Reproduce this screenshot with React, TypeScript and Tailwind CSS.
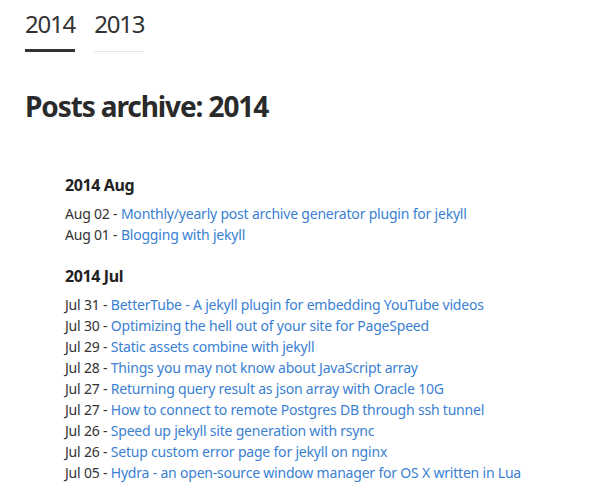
import React from 'react';

interface Post {
  date: string;
  title: string;
}

interface MonthGroup {
  label: string;
  posts: Post[];
}

const groups: MonthGroup[] = [
  {
    label: '2014 Aug',
    posts: [
      { date: 'Aug 02', title: 'Monthly/yearly post archive generator plugin for jekyll' },
      { date: 'Aug 01', title: 'Blogging with jekyll' },
    ],
  },
  {
    label: '2014 Jul',
    posts: [
      { date: 'Jul 31', title: 'BetterTube - A jekyll plugin for embedding YouTube videos' },
      { date: 'Jul 30', title: 'Optimizing the hell out of your site for PageSpeed' },
      { date: 'Jul 29', title: 'Static assets combine with jekyll' },
      { date: 'Jul 28', title: 'Things you may not know about JavaScript array' },
      { date: 'Jul 27', title: 'Returning query result as json array with Oracle 10G' },
      { date: 'Jul 27', title: 'How to connect to remote Postgres DB through ssh tunnel' },
      { date: 'Jul 26', title: 'Speed up jekyll site generation with rsync' },
      { date: 'Jul 26', title: 'Setup custom error page for jekyll on nginx' },
      { date: 'Jul 05', title: 'Hydra - an open-source window manager for OS X written in Lua' },
    ],
  },
];

export default function App() {
  return (
    <div className="min-h-[499px] bg-white px-[25px] text-[#333] [font-family:'Noto_Sans',sans-serif]">
      {/* Year tabs */}
      <div className="flex gap-[19px] pt-[8px]">
        <a className="block border-b-[3px] border-[#333] pb-[9px] text-[24px] leading-[32px] tracking-[-1.2px] text-[#333]">2014</a>
        <a className="block border-b border-[#e5e5e5] pb-[11px] text-[24px] leading-[32px] tracking-[-1.2px] text-[#333]">2013</a>
      </div>

      <h1 className="mt-[36px] text-[28px] font-bold leading-[36px] tracking-[-1.1px] text-[#2a2a2a]">Posts archive: 2014</h1>

      <div className="mt-[50px] pl-[40px]">
        {groups.map((g) => (
          <div key={g.label} className="mb-[20px]">
            <h3 className="mb-[7px] text-[16px] font-bold leading-[22px] tracking-[-0.4px] text-[#222]">{g.label}</h3>
            <ul>
              {g.posts.map((p, i) => (
                <li key={i} className="text-[14px] leading-[21px] tracking-[-0.2px]">
                  {p.date} - <a className="text-[#3a7fd2]">{p.title}</a>
                </li>
              ))}
            </ul>
          </div>
        ))}
      </div>
    </div>
  );
}
